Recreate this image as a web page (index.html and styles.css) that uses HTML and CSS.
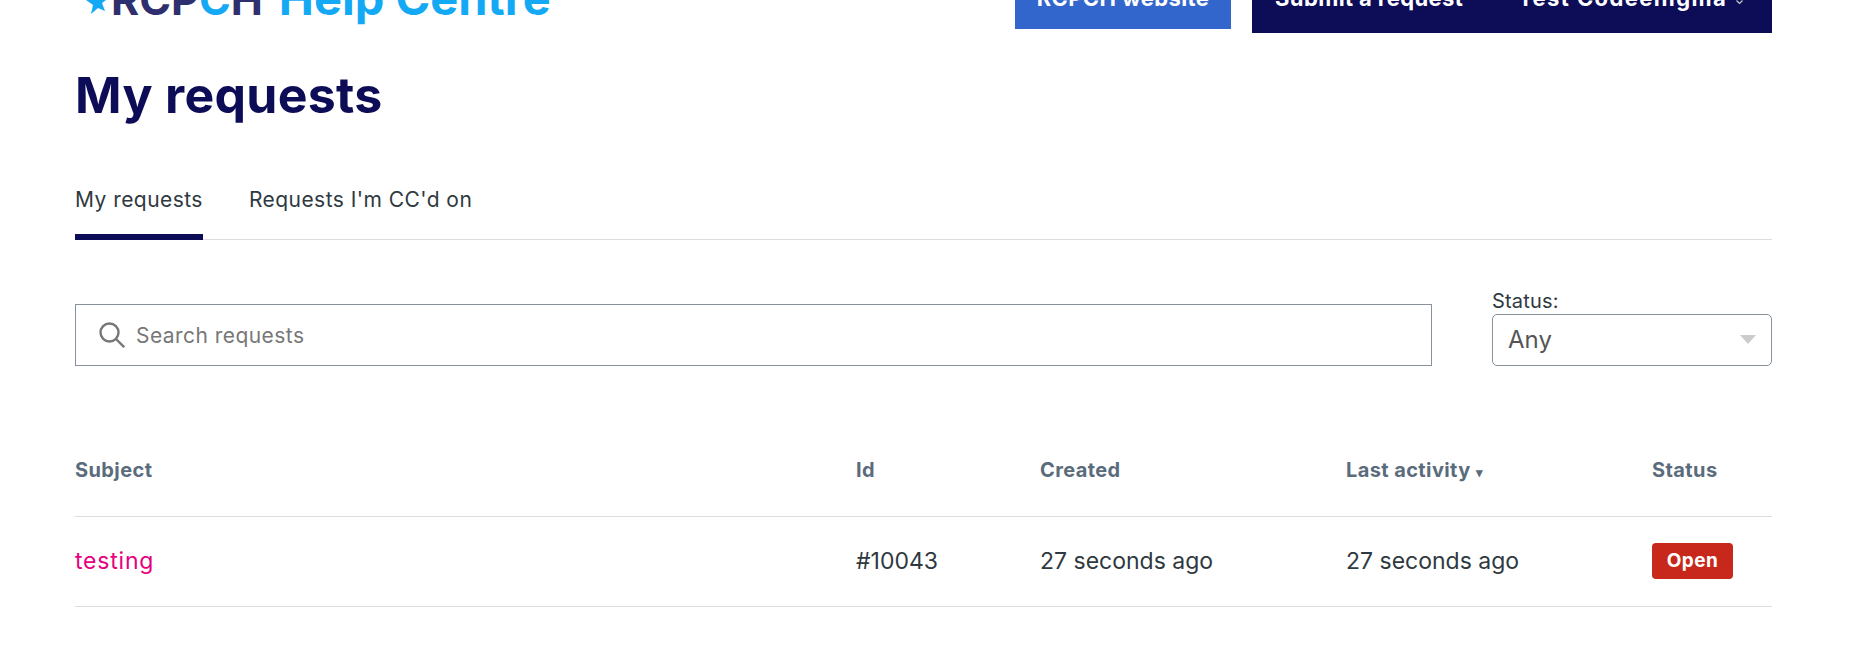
FILE: index.html
```html
<!DOCTYPE html>
<html>
	<head>
		<meta charset="UTF-8">
		<title>My requests</title>
		<link rel="stylesheet" href="styles.css">
	</head>
	<body>
		<div class="page">
			<div class="header">
				<div class="logo">
					<svg class="star" width="21" height="14" viewBox="0 0 21 14"><polygon points="1,0 8,5 6,14 13,8 20,11 17,3 21,0" fill="#14a9f5"/></svg>
					<span class="logo-dark">RCP<span class="logo-c">C</span>H</span>
					<span class="logo-light">Help Centre</span>
				</div>
				<div class="nav">
					<a class="nav-site"><span>RCPCH website</span></a>
					<div class="nav-user">
						<a>Submit a request</a>
						<a class="nav-name">Test Codeenigma</a>
						<svg class="caret" width="7" height="5" viewBox="0 0 7 5" fill="none" stroke="#ccc" stroke-width="1.200"><polyline points="0.500,0.500 3.500,3.500 6.500,0.500"/></svg>
					</div>
				</div>
			</div>
			<h1>My requests</h1>
			<ul class="tabs">
				<li class="current">My requests</li>
				<li>Requests I'm CC'd on</li>
			</ul>
			<div class="filters">
				<div class="search">
					<svg width="26" height="26" viewBox="0 0 26 26" fill="none" stroke="#777" stroke-width="2.400"><circle cx="10.500" cy="10.500" r="9"/><line x1="17" y1="17" x2="25.200" y2="25.200"/></svg>
					<span>Search requests</span>
				</div>
				<div class="status">
					<label>Status:</label>
					<div class="select">
						<span>Any</span>
						<i class="arrow"></i>
					</div>
				</div>
			</div>
			<table class="requests">
				<thead>
					<tr>
						<th class="col-subject">Subject</th>
						<th class="col-id">Id</th>
						<th class="col-created">Created</th>
						<th class="col-activity">Last activity <span class="sort">&#9662;</span></th>
						<th>Status</th>
					</tr>
				</thead>
				<tbody>
					<tr>
						<td><a class="subject">testing</a></td>
						<td>#10043</td>
						<td>27 seconds ago</td>
						<td>27 seconds ago</td>
						<td><span class="badge">Open</span></td>
					</tr>
				</tbody>
			</table>
		</div>
	</body>
</html>
```

FILE: styles.css
```css
*{
	margin: 0;
	padding: 0;
	box-sizing: border-box;
}
html,body{
	height: 100%;
	overflow: hidden;
}
body{
	background: white;
	color: #2f3941;
	font-family: "Inter", "Liberation Sans", sans-serif;
	font-size: 21px;
}
.page{
	margin: 0 77px 0 75px;
}
.header{
	display: flex;
	justify-content: space-between;
	align-items: flex-start;
	height: 33px;
}
.logo{
	display: flex;
	align-items: baseline;
	height: 14px;
	margin-left: 10px;
	font-size: 47px;
	font-weight: 700;
	line-height: 0;
	white-space: nowrap;
}
.logo .star{
	align-self: flex-start;
}
.logo-dark,.logo-light{
	margin-top: -2px;
}
.logo-dark{
	color: #2d2f6f;
	margin-left: 5px;
	font-size: 43px;
}
.logo-c{
	color: #14a9f5;
}
.logo-light{
	color: #14a9f5;
	margin-left: 16px;
	font-size: 47px;
}
.nav{
	display: flex;
	gap: 21px;
	color: white;
	font-size: 22px;
	font-weight: 700;
	letter-spacing: .4px;
	white-space: nowrap;
}
.nav-site{
	display: flex;
	justify-content: center;
	width: 216px;
	height: 29px;
	background: #3366cc;
	line-height: 0;
}
.nav-site span,.nav-user a{
	margin-top: -2px;
}
.nav-user{
	display: flex;
	width: 520px;
	height: 33px;
	padding-left: 23px;
	background: #0d0d57;
	line-height: 0;
}
.nav-user .nav-name{
	margin-left: 55px;
	letter-spacing: 1.400px;
}
.caret{
	margin-left: 9px;
}
h1{
	margin-top: 32px;
	color: #0d0d57;
	font-size: 50px;
	font-weight: 700;
	letter-spacing: .3px;
	line-height: 60px;
}
.tabs{
	display: flex;
	gap: 46px;
	list-style: none;
	margin-top: 57px;
	height: 58px;
	border-bottom: 1px solid #ddd;
	letter-spacing: .45px;
}
.tabs li{
	height: 58px;
	line-height: 36px;
}
.tabs li.current{
	border-bottom: 6px solid #0d0d57;
}
.filters{
	display: flex;
	justify-content: space-between;
	align-items: flex-end;
	margin-top: 49px;
}
.search{
	display: flex;
	align-items: center;
	gap: 11px;
	width: 1357px;
	height: 62px;
	padding-left: 23px;
	border: 1px solid #87929d;
	color: #777;
	letter-spacing: .45px;
}
.status{
	width: 280px;
}
.status label{
	display: block;
	font-size: 20px;
	letter-spacing: .2px;
	line-height: 25px;
}
.select{
	display: flex;
	justify-content: space-between;
	align-items: center;
	height: 52px;
	padding: 0 15px 2px;
	border: 1px solid #87929d;
	border-radius: 5px;
	color: #555;
	font-size: 24px;
}
.arrow{
	width: 0;
	height: 0;
	border-left: 8px solid transparent;
	border-right: 8px solid transparent;
	border-top: 9px solid #ccc;
}
.requests{
	width: 100%;
	margin-top: 59px;
	border-collapse: collapse;
	table-layout: fixed;
}
.requests th,.requests td{
	text-align: left;
	border-bottom: 1px solid #ddd;
}
.requests th{
	height: 91px;
	color: #5a6b7c;
	font-size: 20px;
	font-weight: 700;
	letter-spacing: .4px;
}
.requests td{
	height: 90px;
	font-size: 23px;
}
.col-subject{
	width: 781px;
}
.col-id{
	width: 184px;
}
.col-created{
	width: 306px;
}
.col-activity{
	width: 306px;
}
.sort{
	font-size: 13px;
}
.subject{
	color: #e6007e;
	letter-spacing: .8px;
}
.badge{
	display: inline-block;
	width: 81px;
	height: 36px;
	background: #c8281c;
	border-radius: 4px;
	color: white;
	font-size: 19px;
	font-weight: 700;
	letter-spacing: .4px;
	line-height: 36px;
	text-align: center;
}
```
